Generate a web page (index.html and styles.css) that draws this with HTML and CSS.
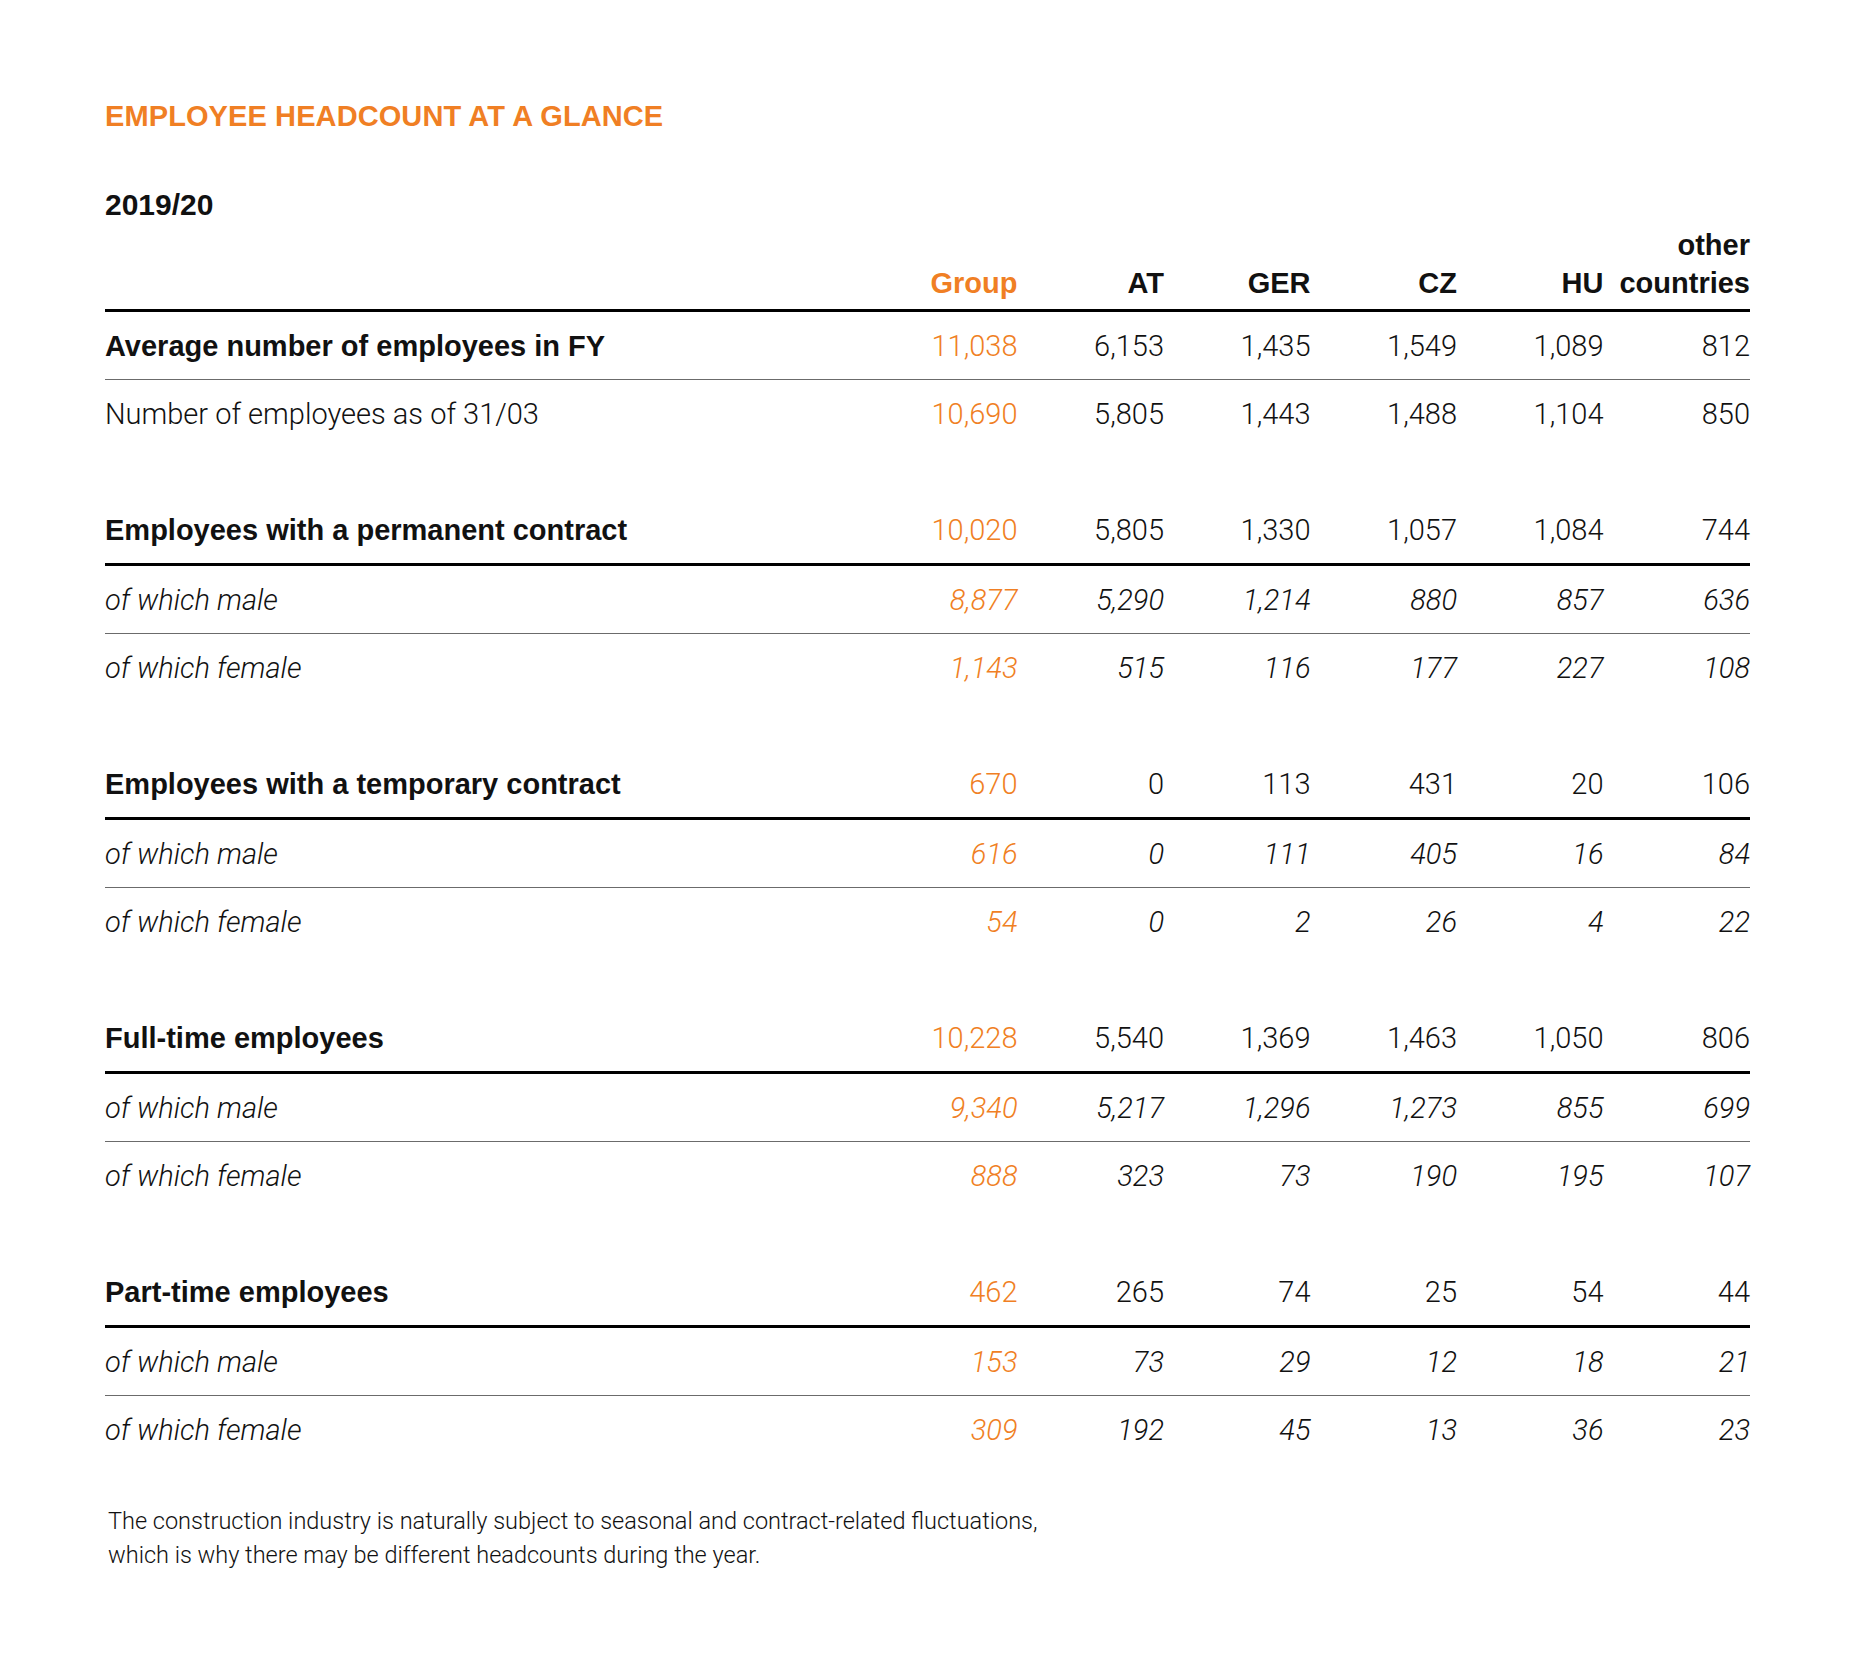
FILE: index.html
```html
<!DOCTYPE html>
<html lang="en">
<head>
<meta charset="utf-8">
<title>Employee headcount at a glance</title>
<link rel="stylesheet" href="styles.css">
</head>
<body>
<main class="page">
  <h1 class="title">EMPLOYEE HEADCOUNT AT A GLANCE</h1>
  <h2 class="year">2019/20</h2>
  <table class="hc">
    <colgroup>
      <col class="c-lbl"><col class="c-num"><col class="c-num"><col class="c-num"><col class="c-num"><col class="c-num"><col class="c-num">
    </colgroup>
    <thead>
      <tr>
        <th class="lbl"></th>
        <th class="grp">Group</th>
        <th>AT</th>
        <th>GER</th>
        <th>CZ</th>
        <th>HU</th>
        <th>other<br>countries</th>
      </tr>
    </thead>
    <tbody>
      <tr class="main thin">
        <td class="lbl">Average number of employees in FY</td>
        <td class="grp">11,038</td><td>6,153</td><td>1,435</td><td>1,549</td><td>1,089</td><td>812</td>
      </tr>
      <tr class="plain">
        <td class="lbl">Number of employees as of 31/03</td>
        <td class="grp">10,690</td><td>5,805</td><td>1,443</td><td>1,488</td><td>1,104</td><td>850</td>
      </tr>
      <tr class="gap"><td colspan="7"></td></tr>

      <tr class="main thick">
        <td class="lbl">Employees with a permanent contract</td>
        <td class="grp">10,020</td><td>5,805</td><td>1,330</td><td>1,057</td><td>1,084</td><td>744</td>
      </tr>
      <tr class="sub thin">
        <td class="lbl">of which male</td>
        <td class="grp">8,877</td><td>5,290</td><td>1,214</td><td>880</td><td>857</td><td>636</td>
      </tr>
      <tr class="sub">
        <td class="lbl">of which female</td>
        <td class="grp">1,143</td><td>515</td><td>116</td><td>177</td><td>227</td><td>108</td>
      </tr>
      <tr class="gap"><td colspan="7"></td></tr>

      <tr class="main thick">
        <td class="lbl">Employees with a temporary contract</td>
        <td class="grp">670</td><td>0</td><td>113</td><td>431</td><td>20</td><td>106</td>
      </tr>
      <tr class="sub thin">
        <td class="lbl">of which male</td>
        <td class="grp">616</td><td>0</td><td>111</td><td>405</td><td>16</td><td>84</td>
      </tr>
      <tr class="sub">
        <td class="lbl">of which female</td>
        <td class="grp">54</td><td>0</td><td>2</td><td>26</td><td>4</td><td>22</td>
      </tr>
      <tr class="gap"><td colspan="7"></td></tr>

      <tr class="main thick">
        <td class="lbl">Full-time employees</td>
        <td class="grp">10,228</td><td>5,540</td><td>1,369</td><td>1,463</td><td>1,050</td><td>806</td>
      </tr>
      <tr class="sub thin">
        <td class="lbl">of which male</td>
        <td class="grp">9,340</td><td>5,217</td><td>1,296</td><td>1,273</td><td>855</td><td>699</td>
      </tr>
      <tr class="sub">
        <td class="lbl">of which female</td>
        <td class="grp">888</td><td>323</td><td>73</td><td>190</td><td>195</td><td>107</td>
      </tr>
      <tr class="gap"><td colspan="7"></td></tr>

      <tr class="main thick">
        <td class="lbl">Part-time employees</td>
        <td class="grp">462</td><td>265</td><td>74</td><td>25</td><td>54</td><td>44</td>
      </tr>
      <tr class="sub thin">
        <td class="lbl">of which male</td>
        <td class="grp">153</td><td>73</td><td>29</td><td>12</td><td>18</td><td>21</td>
      </tr>
      <tr class="sub">
        <td class="lbl">of which female</td>
        <td class="grp">309</td><td>192</td><td>45</td><td>13</td><td>36</td><td>23</td>
      </tr>
    </tbody>
  </table>
  <p class="note">The construction industry is naturally subject to seasonal and contract-related fluctuations,<br>which is why there may be different headcounts during the year.</p>
</main>
</body>
</html>
```
FILE: styles.css
```css
html, body {
  margin: 0;
  padding: 0;
  background: #ffffff;
}

body {
  font-family: Roboto, "Liberation Sans", Arial, sans-serif;
  font-weight: 300;
  color: #111111;
}

.page {
  padding: 100px 0 80px 105px;
  width: 1645px;
}

.title {
  margin: 0;
  font-family: "Liberation Sans", Arial, sans-serif;
  font-size: 29px;
  line-height: 33px;
  font-weight: 700;
  color: #f07f24;
  letter-spacing: 0.1px;
}

.year {
  margin: 55px 0 5px;
  font-family: "Liberation Sans", Arial, sans-serif;
  font-size: 30px;
  line-height: 33px;
  font-weight: 700;
  color: #111111;
}

.hc {
  width: 1645px;
  border-collapse: collapse;
  table-layout: fixed;
  font-size: 29px;
}

.c-lbl { width: 766px; }
.c-num { width: 146.5px; }

.hc th {
  font-family: "Liberation Sans", Arial, sans-serif;
  font-weight: 700;
  text-align: right;
  line-height: 38px;
  padding: 0 0 7px;
  vertical-align: bottom;
  border-bottom: 3px solid #000000;
  white-space: nowrap;
}

.hc th.grp { color: #f07f24; }

.hc td {
  padding: 2px 0 0;
  height: 65px;
  line-height: 65px;
  text-align: right;
  white-space: nowrap;
}

.hc td.lbl { text-align: left; }

.hc td.grp { color: #f07f24; }

.main td.lbl {
  font-family: "Liberation Sans", Arial, sans-serif;
  font-weight: 700;
}

.sub td { font-style: italic; }

.thin td { border-bottom: 1px solid #6b6b6b; }
.thick td { border-bottom: 3px solid #000000; }

.hc tr.gap td {
  height: 49px;
  line-height: 0;
  padding: 0;
}

.note {
  margin: 41px 0 0 3px;
  font-size: 23.5px;
  line-height: 34px;
  color: #111111;
}
```
